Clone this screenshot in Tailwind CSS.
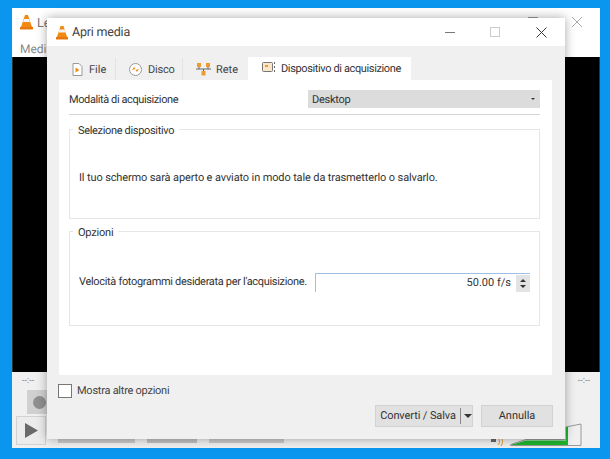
<!DOCTYPE html>
<html>
  <head>
    <meta charset="UTF-8" />
    <script src="https://cdn.jsdelivr.net/npm/@tailwindcss/browser@4"></script>
    <title>Apri media</title>
  </head>
  <body class="bg-[#0a96ef] w-[610px] h-[459px] overflow-hidden relative font-['Roboto',sans-serif] text-[11px] text-[#333] [text-rendering:geometricPrecision]">
    <!-- vlc main window, behind the dialog -->
    <div class="absolute left-[12px] top-[8px] w-[588px] h-[440px] bg-[#f0f0f0] flex flex-col">
      <div class="h-[49px] bg-white shrink-0 relative">
        <svg class="absolute left-[7px] top-[6px]" width="15" height="16" viewBox="0 0 15 16">
          <path d="M6 1h3l4 12H2z" fill="#f08a12" />
          <path d="M5 5h5l1 3H4z" fill="#f5f5f5" />
          <path d="M1 13h13v2.500H1z" fill="#e8780c" />
        </svg>
        <span class="absolute left-[25px] top-[7px] text-[12.500px] text-[#777]">Le</span>
        <span class="absolute left-[8px] top-[32px] text-[12px] text-[#888]">Medi</span>
        <div class="absolute left-[516px] top-[9px] w-[10px] h-px bg-[#999]"></div>
        <span class="absolute right-[17px] top-[8px]">
          <svg width="12" height="12" viewBox="0 0 12 12"><path d="M1 1l10 10M11 1L1 11" stroke="#aaa" fill="none" /></svg>
        </span>
      </div>
      <div class="h-[315px] bg-black shrink-0 border-x border-[#333]"></div>
      <div class="flex-1 relative">
        <span class="absolute left-[10px] top-[3px] text-[9px] text-[#777]">--:--</span>
        <span class="absolute right-[10px] top-[3px] text-[9px] text-[#777]">--:--</span>
        <div class="absolute left-[15px] top-[18px] w-[20px] h-[24px] bg-[#d0d0d0] flex items-center pl-[6px]">
          <div class="w-[13px] h-[13px] rounded-full bg-[#8f8f8f]"></div>
        </div>
        <div class="absolute left-[4px] top-[44px] w-[30px] h-[29px] border border-[#d2d2d2] bg-[#ececec] flex items-center justify-center">
          <svg width="15" height="17" viewBox="0 0 15 17"><path d="M1 1l13 7.500L1 16z" fill="#6a6a6a" /></svg>
        </div>
        <div class="absolute left-[46px] top-[67px] flex gap-[12px]">
          <div class="w-[77px] h-[4px] bg-[#c9c9c9]"></div>
          <div class="w-[50px] h-[4px] bg-[#c0c0c0]"></div>
          <div class="w-[75px] h-[4px] bg-[#c9c9c9]"></div>
        </div>
        <svg class="absolute left-[478px] top-[40px]" width="94" height="36" viewBox="0 0 94 36">
          <path d="M1 27h5v3H1z" fill="#666" />
          <path d="M8 26c2 2 2 5 0 7M11 25c2 3 2 6 0 9" stroke="#e8891a" fill="none" />
          <path d="M20.500 32.500L36 27.500H76V15L91 12V33.500H20.500z" fill="#f0f0f0" stroke="#999" />
          <path d="M22 32.500L36 28.500H76V15H78V33H22z" fill="#1fb52f" />
        </svg>
      </div>
    </div>

    <!-- open media dialog -->
    <div class="absolute left-[47px] top-[18px] w-[518px] h-[421px] bg-[#f0f0f0] flex flex-col shadow-[0_0_10px_rgba(0,0,0,0.35)]">
      <div class="h-[28px] bg-white flex items-center shrink-0">
        <svg class="ml-[8px] shrink-0" width="14" height="15" viewBox="0 0 14 15">
          <path d="M5.500 1h3l3.500 11H2z" fill="#f08a12" />
          <path d="M4.500 4.500h5l1 3h-7z" fill="#f5f5f5" />
          <path d="M1 12h12v2.500H1z" fill="#e8780c" />
        </svg>
        <span class="ml-[3px] mt-[2px] text-[12.500px] tracking-[-0.2px] text-[#444]">Apri media</span>
        <div class="ml-auto flex items-center">
          <div class="w-[10px] h-px bg-[#777] mr-[35px]"></div>
          <div class="w-[10px] h-[10px] border border-[#ccc] mr-[36px]"></div>
          <svg class="mr-[18px]" width="11" height="11" viewBox="0 0 11 11"><path d="M0.500 0.500l10 10M10.500 0.500l-10 10" stroke="#333" fill="none" /></svg>
        </div>
      </div>

      <div class="flex items-end ml-[13px] mt-[11px] h-[23px] text-[#444] shrink-0">
        <div class="w-[56px] h-[22px] border-r border-[#e2e2e2] flex items-center pl-[12px] gap-[6px]">
          <svg class="shrink-0" width="11" height="13" viewBox="0 0 11 13">
            <path d="M1 .5h6l3 3v9H1z" fill="#fff" stroke="#999" />
            <path d="M3.500 4.500l4 2.500-4 2.500z" fill="#f08a12" />
          </svg>
          <span class="mt-[2px]">File</span>
        </div>
        <div class="w-[67px] h-[22px] border-r border-[#e2e2e2] flex items-center pl-[13px] gap-[6px]">
          <svg class="shrink-0" width="13" height="13" viewBox="0 0 13 13">
            <circle cx="6.500" cy="6.500" r="6" fill="#fff" stroke="#999" />
            <path d="M3 7l2-3 1.500 2zM10 6l-2 3-1.500-2z" fill="#f08a12" />
          </svg>
          <span class="mt-[2px] tracking-[-0.2px]">Disco</span>
        </div>
        <div class="w-[65px] h-[22px] flex items-center pl-[13px] gap-[5px]">
          <svg class="shrink-0" width="15" height="13" viewBox="0 0 15 13">
            <path d="M1 0h4v4H1zM10 0h4v4h-4zM5.500 8h4v4.500h-4z" fill="#ee9a33" />
            <path d="M0 6h15M7.500 6v2M3 4v2M12 4v2" stroke="#666" fill="none" />
          </svg>
          <span class="mt-[2px]">Rete</span>
        </div>
        <div class="w-[163px] h-[24px] bg-white flex items-center pl-[14px] gap-[5px] -mb-px whitespace-nowrap">
          <svg class="-mt-[4px] shrink-0" width="14" height="13" viewBox="0 0 14 13">
            <rect x="0.500" y="1.500" width="10" height="9" rx="1" fill="#fbe6c8" stroke="#777" />
            <path d="M3 4h3v2H3z" fill="#ee9a33" />
            <path d="M12.500 1v2M12.500 5v2M12.500 9v2" stroke="#666" />
          </svg>
          <span class="text-[#333] tracking-[-0.37px]">Dispositivo di acquisizione</span>
        </div>
      </div>

      <!-- tab panel -->
      <div class="ml-[12px] w-[493px] h-[295px] bg-white shrink-0 pl-[10px] pr-[12px] pt-[10px]">
        <div class="flex items-center h-[18px]">
          <span class="w-[239px] mt-[2px] tracking-[-0.4px]">Modalità di acquisizione</span>
          <div class="w-[232px] h-[18px] bg-[#dcdcdc] flex items-center justify-between pl-[4px] pr-[5px]">
            <span class="mt-[2px] tracking-[-0.25px]">Desktop</span>
            <span class="w-0 h-0 border-x-[2px] border-x-transparent border-t-[2px] border-t-[#333]"></span>
          </div>
        </div>
        <div class="h-px bg-[#d6d6d6] mt-[6px]"></div>

        <div class="relative border border-[#e6e6e6] h-[90px] mt-[14px] flex items-center pl-[9px] pt-[9px]">
          <span class="absolute left-[3px] -top-[7px] bg-white px-[5px] tracking-[-0.33px]">Selezione dispositivo</span>
          <span class="tracking-[-0.13px]">Il tuo schermo sarà aperto e avviato in modo tale da trasmetterlo o salvarlo.</span>
        </div>

        <div class="relative border border-[#e6e6e6] h-[95px] mt-[12px] flex items-center pl-[9px] pt-[8px]">
          <span class="absolute left-[3px] -top-[7px] bg-white px-[5px] tracking-[-0.2px]">Opzioni</span>
          <span class="w-[236px] shrink-0 whitespace-nowrap tracking-[-0.32px]">Velocità fotogrammi desiderata per l'acquisizione.</span>
          <div class="w-[215px] h-[19px] border-t border-l border-[#9fc0e6] flex items-center justify-end">
            <span class="mr-[5px]">50.00 f/s</span>
            <div class="w-[14px] h-[17px] bg-[#e3e3e3] flex flex-col items-center justify-center gap-[3px]">
              <span class="w-0 h-0 border-x-[3px] border-x-transparent border-b-[3px] border-b-[#333]"></span>
              <span class="w-0 h-0 border-x-[3px] border-x-transparent border-t-[3px] border-t-[#333]"></span>
            </div>
          </div>
        </div>
      </div>

      <label class="flex items-center ml-[11px] mt-[9px] gap-[5px] h-[14px] shrink-0">
        <span class="w-[14px] h-[14px] border border-[#777] bg-white"></span>
        <span class="text-[#444] mt-[1px] tracking-[-0.25px]">Mostra altre opzioni</span>
      </label>

      <div class="flex justify-end mt-[7px] mr-[12px] gap-[8px] text-[#333]">
        <div class="w-[98px] h-[22px] bg-[#e1e1e1] border border-[#d2d2d2] flex items-center">
          <span class="w-[85px] text-center border-r border-[#888] h-[16px] leading-[16px] tracking-[-0.1px]">Converti / Salva</span>
          <span class="ml-[3px] w-0 h-0 border-x-[4px] border-x-transparent border-t-[4px] border-t-[#333]"></span>
        </div>
        <div class="w-[72px] h-[22px] bg-[#e1e1e1] border border-[#d2d2d2] flex items-center justify-center">Annulla</div>
      </div>
    </div>
  </body>
</html>
